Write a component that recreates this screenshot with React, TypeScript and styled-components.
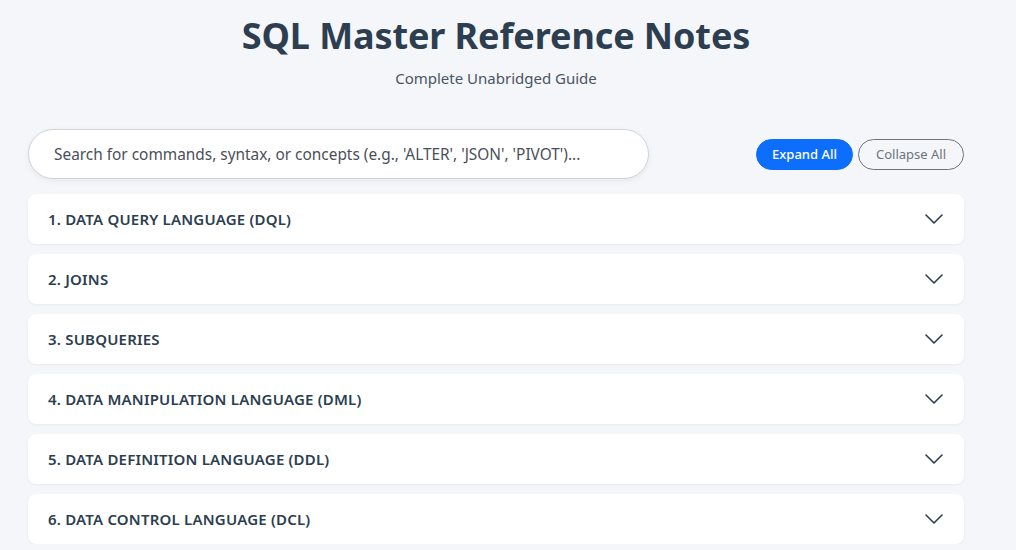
import React, { useState } from "react";
import styled, { createGlobalStyle } from "styled-components";

const Global = createGlobalStyle`
  html, body { margin: 0; padding: 0; background: #f4f6f9; }
  body { font-family: "Noto Sans", "Open Sans", sans-serif; color: #2c3e50; }
  * { box-sizing: border-box; }
`;

const Page = styled.div`
  width: 936px;
  margin-left: 28px;
  padding-top: 10px;
`;

const Header = styled.header`
  display: flex;
  flex-direction: column;
  align-items: center;
`;

const Title = styled.h1`
  margin: 0;
  font-size: 36px;
  font-weight: 700;
  line-height: 52px;
  color: #2c3e50;
  letter-spacing: -0.1px;
`;

const Subtitle = styled.p`
  margin: 6px 0 0;
  font-size: 15px;
  line-height: 20px;
  color: #4a5563;
`;

const Toolbar = styled.div`
  display: flex;
  align-items: center;
  justify-content: space-between;
  margin-top: 41px;
`;

const Search = styled.input`
  width: 621px;
  height: 50px;
  border: 1px solid #cfd4da;
  border-radius: 25px;
  padding: 0 25px;
  font-family: inherit;
  font-size: 15.4px;
  background: #fff;
  box-shadow: 0 2px 6px rgba(0, 0, 0, 0.06);
  outline: none;
  &::placeholder { color: #4a4f57; }
`;

const Buttons = styled.div`
  display: flex;
  gap: 5px;
`;

const Btn = styled.button<{ $primary?: boolean }>`
  height: 31px;
  border-radius: 16px;
  padding: 0 ${(p) => (p.$primary ? 15 : 17)}px;
  font-family: inherit;
  font-size: 13px;
  cursor: pointer;
  border: 1px solid ${(p) => (p.$primary ? "#0d6efd" : "#6c757d")};
  background: ${(p) => (p.$primary ? "#0d6efd" : "transparent")};
  color: ${(p) => (p.$primary ? "#fff" : "#6c757d")};
  font-weight: ${(p) => (p.$primary ? 500 : 400)};
`;

const List = styled.div`
  display: flex;
  flex-direction: column;
  gap: 10px;
  margin-top: 15px;
`;

const Card = styled.div`
  background: #fff;
  border-radius: 8px;
  box-shadow: 0 1px 3px rgba(0, 0, 0, 0.05);
`;

const CardHead = styled.div`
  height: 50px;
  display: flex;
  align-items: center;
  justify-content: space-between;
  padding: 0 21px 0 20px;
  cursor: pointer;
`;

const CardTitle = styled.span`
  font-size: 15px;
  font-weight: 600;
  color: #2c3e50;
  letter-spacing: 0.2px;
`;

const Chevron = ({ open }: { open: boolean }) => (
  <svg width="18" height="10" viewBox="0 0 18 10" style={{ transform: open ? "rotate(180deg)" : "none" }}>
    <polyline points="1,1 9,9 17,1" fill="none" stroke="#2c3e50" strokeWidth="1.6" strokeLinecap="round" strokeLinejoin="round" />
  </svg>
);

const sections = [
  "1. DATA QUERY LANGUAGE (DQL)",
  "2. JOINS",
  "3. SUBQUERIES",
  "4. DATA MANIPULATION LANGUAGE (DML)",
  "5. DATA DEFINITION LANGUAGE (DDL)",
  "6. DATA CONTROL LANGUAGE (DCL)",
];

export default function App() {
  const [open, setOpen] = useState<boolean[]>(sections.map(() => false));
  return (
    <>
      <Global />
      <Page>
        <Header>
          <Title>SQL Master Reference Notes</Title>
          <Subtitle>Complete Unabridged Guide</Subtitle>
        </Header>
        <Toolbar>
          <Search placeholder="Search for commands, syntax, or concepts (e.g., 'ALTER', 'JSON', 'PIVOT')..." />
          <Buttons>
            <Btn $primary onClick={() => setOpen(sections.map(() => true))}>Expand All</Btn>
            <Btn onClick={() => setOpen(sections.map(() => false))}>Collapse All</Btn>
          </Buttons>
        </Toolbar>
        <List>
          {sections.map((s, i) => (
            <Card key={s}>
              <CardHead onClick={() => setOpen(open.map((v, j) => (j === i ? !v : v)))}>
                <CardTitle>{s}</CardTitle>
                <Chevron open={open[i]} />
              </CardHead>
            </Card>
          ))}
        </List>
      </Page>
    </>
  );
}
